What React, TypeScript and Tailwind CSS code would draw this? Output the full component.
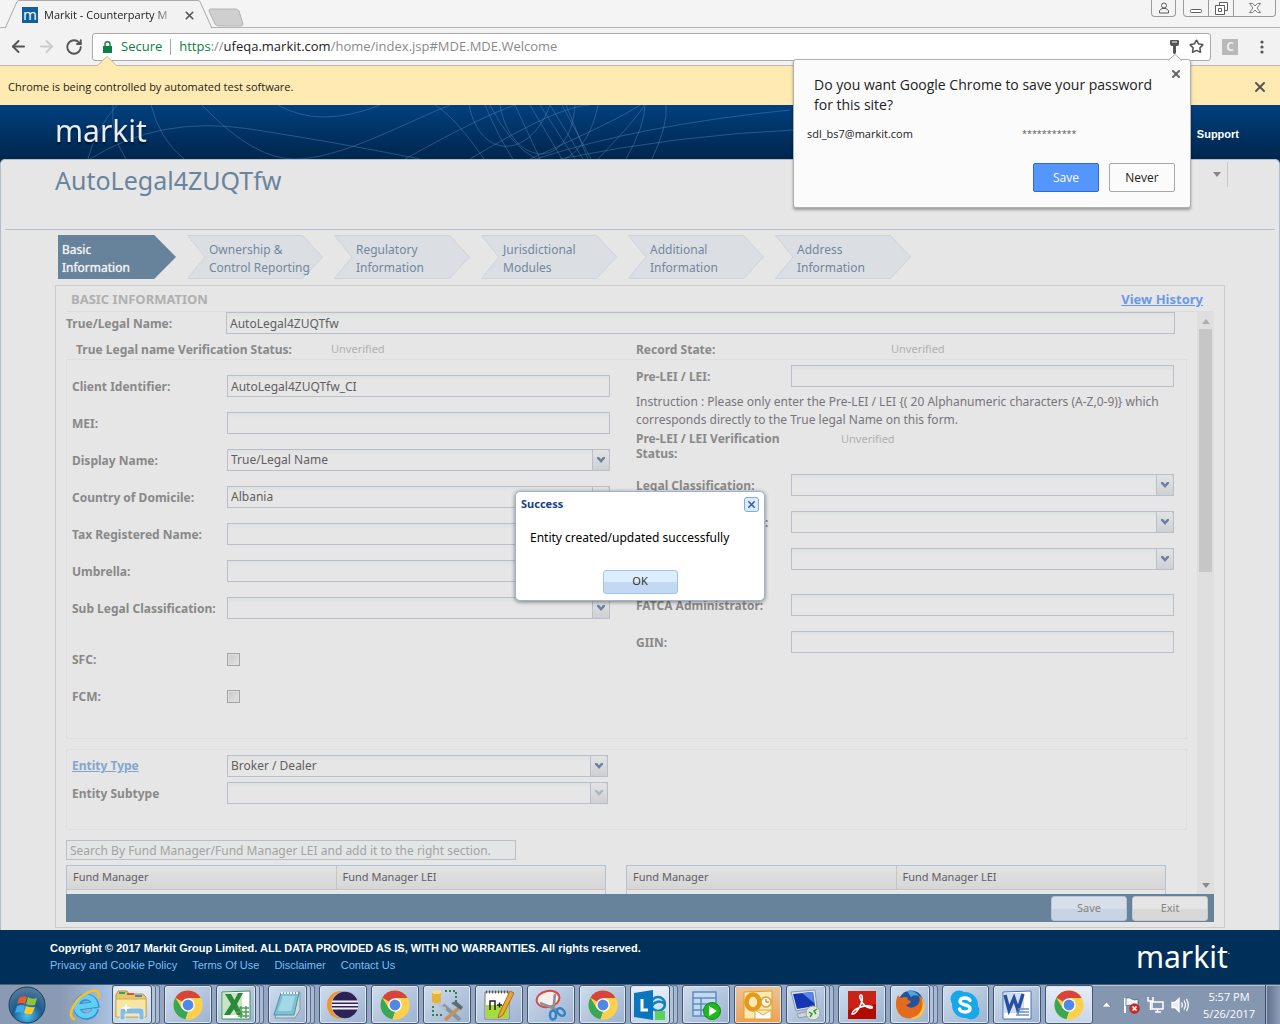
import React from "react";
import { ArrowLeft, ArrowRight, RotateCw, Star, X } from "lucide-react";

const label = "font-bold text-[12px] leading-[15px] text-[#898989]";
const field =
  "h-[22px] w-full border border-[#b9bec8] bg-linear-to-b from-[#dde1e1] via-[#e6e6e6] via-25% to-[#e6e6e6] px-[3px] text-[12px] text-[#5f5f62] outline-none rounded-none";

function Chevron({ faded = false }: { faded?: boolean }) {
  return (
    <span className="pointer-events-none absolute inset-y-0 right-0 flex w-[18px] items-center justify-center border border-[#b9bec8] rounded-tr-[3px] bg-linear-to-b from-[#e2e3e4] to-[#cfd0d1]">
      <svg width="8" height="6" viewBox="0 0 8 6" className={faded ? "opacity-40" : ""}>
        <path d="M0 0h2l2 2.200L6 0h2v1.500L4 6 0 1.500z" fill="#6d80a3" />
      </svg>
    </span>
  );
}

type RowProps = { id: string; text: string; value?: string; kind?: "text" | "select" | "check"; disabled?: boolean; className?: string };

function Row({ id, text, value = "", kind = "text", disabled, className = "" }: RowProps) {
  return (
    <div className={"flex h-[22px] items-center " + className}>
      <label htmlFor={id} className={label + " w-[155px] shrink-0 whitespace-nowrap"}>{text}</label>
      {kind === "text" && <input id={id} type="text" defaultValue={value} className={field} />}
      {kind === "select" && (
        <div className="relative min-w-0 flex-1">
          <select id={id} disabled={disabled} className={field + " appearance-none block"}>
            <option>{value}</option>
          </select>
          <Chevron faded={disabled} />
        </div>
      )}
      {kind === "check" && (
        <input id={id} type="checkbox" className="size-[13px] appearance-none border border-[#a3a3a3] bg-linear-to-br from-[#c9c9c9] to-[#e2e2e2] shadow-[inset_0_0_0_1px_#dedede]" />
      )}
    </div>
  );
}

const steps = [
  ["Basic", "Information"],
  ["Ownership &", "Control Reporting"],
  ["Regulatory", "Information"],
  ["Jurisdictional", "Modules"],
  ["Additional", "Information"],
  ["Address", "Information"],
];

function FundTable({ name }: { name: string }) {
  return (
    <table aria-label={name} className="h-[29px] w-[540px] table-fixed border-collapse border border-b-0 border-[#b2c1d6] text-left text-[11px] text-[#5f5f62]">
      <thead>
        <tr className="h-[24px] bg-linear-to-b from-[#e3e3e3] to-[#d5d5d5]">
          <th className="border-r border-b border-[#c6c6c8] px-[6px] font-normal">Fund Manager</th>
          <th className="border-b border-[#c6c6c8] px-[6px] font-normal">Fund Manager LEI</th>
        </tr>
      </thead>
      <tbody><tr><td colSpan={2} /></tr></tbody>
    </table>
  );
}

function ChromeIcon() {
  return (
    <svg width="30" height="30" viewBox="0 0 30 30">
      <circle cx="15" cy="15" r="14.5" fill="#fdd14b" />
      <path d="M15 15 2.4 7.8A14.5 14.5 0 0 1 27.6 8H15z" fill="#d8443a" />
      <path d="M2.4 7.8 8.9 18.6 15 21.5l-2.6 7.8A14.5 14.5 0 0 1 2.4 7.8z" fill="#3aa757" />
      <path d="M27.6 8H15l6.1 10.5-6.3 11A14.5 14.5 0 0 0 27.6 8z" fill="#fdd14b" />
      <circle cx="15" cy="15" r="6.8" fill="#fff" />
      <circle cx="15" cy="15" r="5.4" fill="#4e88e8" />
    </svg>
  );
}
function IEIcon() {
  return (
    <svg width="32" height="32" viewBox="0 0 32 32">
      <g transform="rotate(-8 16 16)">
        <path d="M26 21A9.500 9.500 0 1 1 26.500 17H9" fill="none" stroke="#2a8fd6" strokeWidth="7" />
        <path d="M25.500 21A9.500 9.500 0 1 1 26.200 17H9" fill="none" stroke="#62cdf7" strokeWidth="5" />
      </g>
      <path d="M6 30.500C-4 28 6 9 20 3c7-3 11.500-1.500 9 6" fill="none" stroke="#f3c02e" strokeWidth="2.600" />
    </svg>
  );
}
function FolderIcon() {
  return (
    <svg width="33" height="32" viewBox="0 0 33 32">
      <path d="M1 6 3 2h9l2 3h14l3 3v20H1z" fill="#e8c76a" stroke="#b99742" />
      <path d="M4 3h6v2H4z" fill="#37a35a" /><path d="M12 4h7v2h-7z" fill="#d55236" /><path d="M20 6h7v2h-7z" fill="#4289cf" />
      <path d="M1 10h30v18H1z" fill="#f8e6a0" stroke="#cdae5c" />
      <path d="M5 31v-9q0-3 3-3h17q4 0 4 3v9h-5v-6H10v6z" fill="#86bce2" stroke="#d9effc" />
      <path d="m11 14 1 4 4 1-4 1-1 4-1-4-4-1 4-1z" fill="#fff" />
    </svg>
  );
}
function ExcelIcon() {
  return (
    <svg width="30" height="30" viewBox="0 0 30 30">
      <path d="M1 2 29 1v28H1z" fill="#fff" stroke="#3c9550" />
      <path d="M2 3h19v22H2z" fill="#c9e4c5" />
      <path d="M4 4h6l3.500 6L17 3h5l-6 11 6 11h-6l-3-6-4 6H3l7-11z" fill="#2b8a3a" />
      <g stroke="#4d9e57" strokeWidth="1.500"><path d="M16 18h12M15 22h13M17 26h11" /><path d="M20 16v12M25 16v12" /></g>
    </svg>
  );
}
function NotepadIcon() {
  return (
    <svg width="32" height="30" viewBox="0 0 32 30">
      <path d="m10 4 19-2v18l-5 8H4z" fill="#cfd8dc" stroke="#8298a3" />
      <path d="M10 3h18l-5 22H3z" fill="#7fc0d4" stroke="#4d8fa6" />
      <path d="M12 6h12l-4 15H7z" fill="#a5d8e6" />
      <path d="M10 3h18" stroke="#eef3f5" strokeWidth="2" strokeDasharray="2 1" />
    </svg>
  );
}
function EclipseIcon() {
  return (
    <svg width="32" height="30" viewBox="0 0 32 30">
      <circle cx="14" cy="15" r="14" fill="#f7941e" />
      <circle cx="18" cy="15" r="14" fill="#a9bcd4" />
      <circle cx="18" cy="15" r="13.200" fill="#2c2255" />
      <path d="M5 11.500h26M4.800 15h26.400M5 18.500h26" stroke="#f1eef8" strokeWidth="1.800" />
    </svg>
  );
}
function ToolsIcon() {
  return (
    <svg width="32" height="32" viewBox="0 0 32 32">
      <path d="M1 3v10q4 3 9 0V3z" fill="#e7b23c" /><ellipse cx="5.500" cy="3" rx="4.500" ry="2" fill="#f7dc8a" />
      <path d="M14 2h11v12M2 17v9h10" fill="none" stroke="#35853e" strokeWidth="2" strokeDasharray="2 2" />
      <path d="m12 16 17 15" stroke="#88949e" strokeWidth="4" /><path d="M9 13q-1 7 6 6" fill="none" stroke="#b7c0c8" strokeWidth="3" />
      <path d="M29 18 14 31" stroke="#c69253" strokeWidth="3.500" /><path d="m20 14 10 7 2-3-7-6z" fill="#5f6b75" />
    </svg>
  );
}
function NppIcon() {
  return (
    <svg width="32" height="32" viewBox="0 0 32 32">
      <path d="M2 3h24v27H2z" fill="#fff" stroke="#777" /><path d="M3 16h22v13H3z" fill="#a4dc3a" />
      <path d="M3 3h22" stroke="#555" strokeWidth="3" strokeDasharray="1 2" />
      <path d="M7 21v-9h5v9M14 16h5M16.500 13.500v5M20 16h4M22 14v4" stroke="#222" strokeWidth="1.500" fill="none" />
      <path d="m16 25 11-23 4 2-11 22-5 3z" fill="#eda532" stroke="#a66f1f" />
    </svg>
  );
}
function SnipIcon() {
  return (
    <svg width="32" height="32" viewBox="0 0 32 32">
      <ellipse cx="13" cy="10" rx="11.500" ry="8" transform="rotate(-12 13 10)" fill="#f6eeee" stroke="#d84a45" strokeWidth="2" />
      <path d="m5 14 18 7M20 5l-2 18" stroke="#8b9298" strokeWidth="2.500" />
      <ellipse cx="18" cy="26" rx="3" ry="4.500" fill="none" stroke="#2e84c7" strokeWidth="2.500" />
      <ellipse cx="26" cy="23" rx="3" ry="4.500" transform="rotate(-45 26 23)" fill="none" stroke="#2e84c7" strokeWidth="2.500" />
    </svg>
  );
}
function LyncIcon() {
  return (
    <svg width="32" height="32" viewBox="0 0 32 32">
      <circle cx="24" cy="15" r="7" fill="none" stroke="#1180c6" strokeWidth="2.500" /><path d="M17 18q6-9 14-3" stroke="#1180c6" strokeWidth="2.500" fill="none" />
      <path d="M0 4 19 1v30L0 28z" fill="#0b75bd" /><path d="M8 10v11h6" fill="none" stroke="#fff" strokeWidth="3" />
      <path d="M21 22h10v9H21z" fill="#5bd15a" />
    </svg>
  );
}
function SqlIcon() {
  return (
    <svg width="30" height="30" viewBox="0 0 30 30">
      <path d="M2 2h23v24H2zM2 8h23M2 14h23M2 20h23M10 8v18" fill="#c4d9f0" stroke="#5f8cbf" strokeWidth="1.500" />
      <circle cx="21" cy="21" r="8.500" fill="#1cba1c" stroke="#0f8a10" /><path d="m18 16 8 5-8 5z" fill="#fff" />
    </svg>
  );
}
function OutlookIcon() {
  return (
    <svg width="30" height="30" viewBox="0 0 30 30">
      <path d="M1 2 29 1v28H1z" fill="#fbe9b0" stroke="#dda029" />
      <ellipse cx="10" cy="12" rx="6.500" ry="7.500" fill="none" stroke="#e5981b" strokeWidth="4.500" />
      <circle cx="23" cy="12" r="5" fill="#fff6df" stroke="#dda029" strokeWidth="1.500" /><path d="M23 9v3h3" fill="none" stroke="#a66b10" />
      <path d="M12 20h16v9H12zl8 5 8-5" fill="#fff" stroke="#d8a84c" />
    </svg>
  );
}
function RdpIcon() {
  return (
    <svg width="32" height="32" viewBox="0 0 32 32">
      <path d="m1 3 24-2 2 17-21 4z" fill="#dfe4ea" stroke="#8d98a5" /><path d="m3 5 20-2 2 14L7 20z" fill="#1435b4" /><path d="m12 4 11-1 1 11z" fill="#5a86e8" />
      <path d="m7 25 12-3 4 4-14 3z" fill="#cdd3da" stroke="#919aa5" />
      <circle cx="23" cy="24" r="7" fill="#dfe7dd" stroke="#9aa69a" /><path d="m19 23 3 2-2 3M27 20l-3 2 2 3" fill="none" stroke="#2f9a3a" strokeWidth="1.500" />
    </svg>
  );
}
function AdobeIcon() {
  return (
    <svg width="30" height="30" viewBox="0 0 30 30">
      <path d="M1 1h28v28H1z" fill="#b30b00" /><path d="M1 1h28v13L1 20z" fill="#c92317" />
      <path d="M5 24c4 1 12-12 10-18-1-2-3-1-2 2 2 6 7 11 12 10 2-2-6-3-11-1-4 1-9 4-9 7z" fill="none" stroke="#fff" strokeWidth="1.600" />
    </svg>
  );
}
function FirefoxIcon() {
  return (
    <svg width="30" height="30" viewBox="0 0 30 30">
      <circle cx="16" cy="13" r="12.500" fill="#23539a" /><path d="M12 1a12 12 0 0 1 12 5q-6-2-8 1z" fill="#4fa5dd" />
      <path d="M3 5q1 2 3 3 4-2 7 0-2 2 3 3-1 3-5 4 3 4 8 2c6-2 7-8 4-12 8 5 7 15 1 20-8 6-19 4-22-5C0 15 1 9 3 5z" fill="#e66a1b" />
      <path d="M25 5c6 10 1 22-10 23 12 4 20-11 10-23z" fill="#f9c83c" />
    </svg>
  );
}
function SkypeIcon() {
  return (
    <svg width="30" height="30" viewBox="0 0 30 30">
      <circle cx="9" cy="9" r="8.500" fill="#16a9e8" /><circle cx="21" cy="21" r="8.500" fill="#16a9e8" /><circle cx="15" cy="15" r="13" fill="#16a9e8" />
      <path d="M20 10.500C18 6.500 10 7.500 10 11.500S20 14 20 18.500 11 23 9.500 19" fill="none" stroke="#fff" strokeWidth="3.400" strokeLinecap="round" />
    </svg>
  );
}
function WordIcon() {
  return (
    <svg width="30" height="30" viewBox="0 0 30 30">
      <path d="M1 2 29 1v28H1z" fill="#fff" stroke="#4b72b8" /><path d="M2 3h20v20H2z" fill="#d0def3" />
      <path d="m3 5 4 15 5-12 4 12L21 4" fill="none" stroke="#264f9e" strokeWidth="3.400" />
      <path d="M16 19h11M14 22h13M14 25h13" stroke="#6f8fc8" strokeWidth="1.500" />
    </svg>
  );
}
function StartOrb() {
  return (
    <svg width="38" height="38" viewBox="0 0 38 38">
      <defs><radialGradient id="orb" cx=".5" cy=".8" r=".8"><stop offset="0" stopColor="#49c3f2" /><stop offset=".5" stopColor="#1d5c8f" /><stop offset="1" stopColor="#5b7f9c" /></radialGradient></defs>
      <circle cx="19" cy="19" r="18" fill="url(#orb)" stroke="#1b3c5a" />
      <path d="M11 12q4-3 8-1l-2 7q-4-2-8 0z" fill="#ee5b28" /><path d="M20 11q4 3 9 1l-2 7q-5 1-9-1z" fill="#8cc63e" />
      <path d="M9 20q4-2 8 0l-2 7q-4-2-8 0z" fill="#3fa9ee" /><path d="M18 20q4 2 9 1l-3 7q-4 1-8-1z" fill="#fdc926" />
    </svg>
  );
}

const taskbar: { name: string; icon: () => React.JSX.Element; stacked?: boolean; tone?: "light" | "orange" }[] = [
  { name: "Explorer", icon: FolderIcon, stacked: true, tone: "light" },
  { name: "Chrome", icon: ChromeIcon },
  { name: "Excel", icon: ExcelIcon, stacked: true },
  { name: "Notepad", icon: NotepadIcon, stacked: true },
  { name: "Eclipse", icon: EclipseIcon },
  { name: "Chrome", icon: ChromeIcon },
  { name: "Database tools", icon: ToolsIcon },
  { name: "Notepad++", icon: NppIcon },
  { name: "Snipping Tool", icon: SnipIcon },
  { name: "Chrome", icon: ChromeIcon },
  { name: "Lync", icon: LyncIcon, stacked: true, tone: "light" },
  { name: "SQL", icon: SqlIcon },
  { name: "Outlook", icon: OutlookIcon, tone: "orange" },
  { name: "Remote Desktop", icon: RdpIcon, stacked: true },
  { name: "Adobe Reader", icon: AdobeIcon },
  { name: "Firefox", icon: FirefoxIcon, stacked: true },
  { name: "Skype", icon: SkypeIcon },
  { name: "Word", icon: WordIcon },
  { name: "Chrome", icon: ChromeIcon, tone: "light" },
];

function Taskbar() {
  return (
    <nav aria-label="Taskbar" className="flex h-10 items-stretch border-t border-[#4b5d78] bg-[#8596b0] shadow-[inset_0_1px_0_#b9c7da]">
      <div className="flex w-[112px] shrink-0 items-center bg-linear-to-r from-[#8a9ab3] from-55% to-[#a9c3e3]">
        <button aria-label="Start" className="ml-2"><StartOrb /></button>
        <button aria-label="Internet Explorer" className="ml-[23px]"><IEIcon /></button>
      </div>
      <div className="flex min-w-0 flex-1 gap-1 bg-[#93a7c3]">
        {taskbar.map(({ name, icon: Icon, stacked, tone }, i) => (
          <div key={i} className="flex min-w-0 flex-1">
            <button
              aria-label={name}
              className={
                "flex min-w-0 flex-1 items-center justify-center rounded-[3px] border border-[#45566f] shadow-[inset_0_0_0_1px_#dbe6f3] " +
                (tone === "orange"
                  ? "bg-linear-to-b from-[#e9c49c] to-[#f0a04c]"
                  : tone === "light"
                    ? "bg-linear-to-b from-[#e6edf6] to-[#c6d6ea]"
                    : "bg-linear-to-br from-[#cfdcec] to-[#9db3d1]")
              }
            >
              <Icon />
            </button>
            {stacked && <><span className="w-[4px] rounded-r-[3px] border border-l-0 border-[#5c6e88] bg-[#b3c4da]" /><span className="w-[4px] rounded-r-[3px] border border-l-0 border-[#5c6e88] bg-[#a8bad3]" /></>}
          </div>
        ))}
      </div>
      <div className="flex w-[187px] shrink-0 items-center pl-[9px]">
        <svg width="9" height="5" viewBox="0 0 9 5"><path d="M0 5 4.500 0 9 5z" fill="#fff" stroke="#4b5a70" strokeWidth=".5" /></svg>
        <svg width="18" height="18" viewBox="0 0 18 18" className="ml-[12px]">
          <path d="M2 2v15" stroke="#fff" strokeWidth="2" /><path d="M3 2q4-1 6 1t6 0v8q-4 1-6-1T3 10z" fill="#f4f6f9" stroke="#55647b" strokeWidth=".8" />
          <circle cx="11.500" cy="12.500" r="4.800" fill="#d52b2b" stroke="#8d1414" strokeWidth=".6" /><path d="m9.500 10.500 4 4m0-4-4 4" stroke="#fff" strokeWidth="1.600" />
        </svg>
        <svg width="18" height="18" viewBox="0 0 18 18" className="ml-[6px]" fill="none" stroke="#fff" strokeWidth="1.500">
          <path d="M5 6h11v7H5zM8 16h6M10.500 13v3" /><path d="M1 1v4h5V1M3.500 5v9" />
        </svg>
        <svg width="18" height="18" viewBox="0 0 18 18" className="ml-[6px]" fill="none" stroke="#fff" strokeWidth="1.300">
          <path d="M1 6.500h3l4-4v13l-4-4H1z" fill="#e8edf4" /><path d="M10.500 6.500q1.500 2.500 0 5M13 4.500q3 4.500 0 9M15.500 3q3.500 6 0 12" />
        </svg>
        <div className="flex-1 pl-2 text-center font-['Open_Sans',sans-serif] text-[11px] leading-[17px] whitespace-nowrap text-white">
          <div>5:57 PM</div>
          <div>5/26/2017</div>
        </div>
        <button aria-label="Show desktop" className="ml-1 h-full w-[15px] border-l border-[#3e4c62] bg-linear-to-r from-[#5f708a] to-[#8d9db6] shadow-[inset_1px_1px_0_#a8b6ca]" />
      </div>
    </nav>
  );
}

function BrowserChrome() {
  return (
    <div className="relative font-['Open_Sans',sans-serif]">
      <div className="flex h-7 items-start justify-between bg-[#f4f4f4] shadow-[inset_0_-1px_0_#b4b4b4]">
        <div className="flex pl-[5px]">
          <svg width="14" height="29" viewBox="0 0 14 29"><path d="M0 29V28L12 1l2-.5V29z" fill="#f2f2f2" /><path d="M0 28.500 12 1.500 14 .5" fill="none" stroke="#a9a9a9" /></svg>
          <div className="flex h-[29px] w-[179px] items-center border-t border-[#a9a9a9] bg-[#f2f2f2] pl-[3px]">
            <span className="flex size-4 items-center justify-center bg-[#11609b] text-[15px] leading-none text-white"><span className="pb-[2px]">m</span></span>
            <span className="ml-[6px] w-[135px] text-[11px] whitespace-nowrap text-[#222] mask-r-from-80%">Markit - Counterparty M</span>
            <button aria-label="Close tab" className="ml-[4px]"><X size={13} color="#555" strokeWidth={3} /></button>
          </div>
          <svg width="14" height="29" viewBox="0 0 14 29"><path d="M0 .5 2 1.500 14 28.500V29H0z" fill="#f2f2f2" /><path d="M0 .5 2 1.500 14 28.500" fill="none" stroke="#a9a9a9" /></svg>
          <button aria-label="New tab" className="-ml-[4px] mt-[6px]">
            <svg width="36" height="19" viewBox="0 0 36 19"><path d="M2 1h25q3 0 4 2l4 13q0 2-2 2H10q-2 0-3-2L1 3q0-2 1-2z" fill="#cfcfcf" stroke="#b3b3b3" /></svg>
          </button>
        </div>
        <div className="flex pr-[4px]">
          <button aria-label="Profile" className="mr-[7px] flex h-[17px] w-[25px] items-center justify-center rounded-b border border-t-0 border-[#9b9b9b]">
            <svg width="10" height="12" viewBox="0 0 10 12" fill="none" stroke="#5d5d5d"><circle cx="5" cy="3.500" r="2.500" /><path d="M.5 11V8.500L3 6.500h4l2.500 2V11z" /></svg>
          </button>
          <div className="flex h-[17px] divide-x divide-[#9b9b9b] rounded-b border border-t-0 border-[#9b9b9b]">
            <button aria-label="Minimize" className="flex w-[25px] items-center justify-center"><svg width="12" height="12" viewBox="0 0 12 12"><rect x=".5" y="7.500" width="11" height="3" rx="1" fill="#fff" stroke="#5d5d5d" /></svg></button>
            <button aria-label="Restore" className="flex w-[25px] items-center justify-center"><svg width="13" height="13" viewBox="0 0 13 13" fill="#fff" stroke="#5d5d5d"><path d="M4.500.5h8v8h-8z" /><path d="M.5 3.500h9v9h-9z" /><path d="M3.500 6.500h3v3h-3z" /></svg></button>
            <button aria-label="Close window" className="flex w-[41px] items-center justify-center"><svg width="12" height="10" viewBox="0 0 12 10"><path d="M.5.5h3L6 3 8.500.5h3L8 5l3.500 4.500h-3L6 7 3.500 9.500h-3L4 5z" fill="#fff" stroke="#777" /></svg></button>
          </div>
        </div>
      </div>
      <div className="flex h-[38px] items-center border-b border-[#b9b9b9] bg-[#f2f2f2] pl-[9px] pr-4">
        <button aria-label="Back"><ArrowLeft size={19} color="#555" strokeWidth={2.500} /></button>
        <button aria-label="Forward" className="ml-[9px]"><ArrowRight size={19} color="#ccc" strokeWidth={2.500} /></button>
        <button aria-label="Reload" className="ml-[9px]"><RotateCw size={18} color="#555" strokeWidth={2.500} /></button>
        <div className="ml-[9px] flex h-[28px] min-w-0 flex-1 items-center rounded-[3px] border border-[#a9a9a9] bg-white pl-[10px] pr-[6px] text-[13px]">
          <svg width="9" height="12" viewBox="0 0 9 12"><path d="M0 5h9v7H0z" fill="#0b8043" /><path d="M2 5V3q0-2.300 2.500-2.300T7 3v2" fill="none" stroke="#0b8043" strokeWidth="1.400" /></svg>
          <span className="ml-[9px] text-[#0b8043]">Secure</span>
          <span className="mx-[8px] h-4 w-px bg-[#aaa]" />
          <div className="min-w-0 flex-1 truncate text-[#8a8a8a]"><span className="text-[#0b8043]">https</span>://<span className="text-[#222]">ufeqa.markit.com</span>/home/index.jsp#MDE.MDE.Welcome</div>
          <svg width="9" height="14" viewBox="0 0 9 14" className="mr-[10px]"><path d="M0 1q0-1 1-1h7q1 0 1 1v3q0 2-2 2H6v7q-1.500 2-3 0V6H2Q0 6 0 4z" fill="#555" /><path d="M2 2h5" stroke="#fff" /></svg>
          <button aria-label="Bookmark"><Star size={15} color="#555" strokeWidth={2.500} /></button>
        </div>
        <span className="ml-[11px] flex size-4 items-center justify-center bg-[#b9b9b9] text-[12px] font-bold leading-none text-[#eee]">C</span>
        <button aria-label="Menu" className="ml-[22px]"><svg width="4" height="14" viewBox="0 0 4 14" fill="#555"><circle cx="2" cy="2" r="1.600" /><circle cx="2" cy="7" r="1.600" /><circle cx="2" cy="12" r="1.600" /></svg></button>
      </div>
      <div className="relative flex h-[39px] items-center justify-between bg-[#ffeab2] pt-[3px] pl-2 pr-[12px] text-[11px] text-[#222]">
        <svg width="22" height="11" viewBox="0 0 22 11" className="absolute -top-[10px] left-[96px]"><path d="M0 11 11 .5 22 11z" fill="#ffeab2" /><path d="M0 9.500h1.500L11 .5l9.500 9H22" fill="none" stroke="#c9bb97" /></svg>
        <span>Chrome is being controlled by automated test software.</span>
        <button aria-label="Dismiss"><X size={16} color="#555" strokeWidth={3} /></button>
      </div>

      <section aria-label="Save password" className="absolute top-[59px] right-[89px] z-20 w-[398px] rounded-[3px] border border-[#b0b0b0] bg-[#fbfbfb] pb-[15px] text-[#222] shadow-[0_2px_3px_#0005]">
        <svg width="14" height="7" viewBox="0 0 14 7" className="absolute -top-[6px] right-[8px]"><path d="M0 7 7 .5 14 7z" fill="#fbfbfb" /><path d="M0 6.500 7 .5l7 6" fill="none" stroke="#b0b0b0" /></svg>
        <button aria-label="Close" className="absolute top-[8px] right-[8px]"><X size={12} color="#666" strokeWidth={4} /></button>
        <p className="pt-[15px] pl-[20px] text-[14px] leading-[20px]">Do you want Google Chrome to save your password<br />for this site?</p>
        <div className="mt-[10px] flex pl-[13px] text-[11px] leading-[18px]">
          <span className="w-[215px]">sdl_bs7@markit.com</span>
          <span className="text-[9px] text-[#555]">***********</span>
        </div>
        <div className="mt-[20px] flex justify-end gap-[10px] pr-[15px] text-[12px]">
          <button className="h-[29px] w-[66px] rounded-[2px] border border-[#2f6bcb] bg-[#5596fc] text-white">Save</button>
          <button className="h-[29px] w-[66px] rounded-[2px] border border-[#a8a8a8] bg-[#fbfbfb]">Never</button>
        </div>
      </section>
    </div>
  );
}

function SiteHeader() {
  return (
    <header className="relative flex h-[54px] items-center justify-between overflow-hidden bg-linear-to-b from-[#00407f] to-[#00264d] pl-[55px] pr-[41px]">
      <svg width="1280" height="54" viewBox="0 0 1280 54" className="absolute top-0 left-0" fill="none" stroke="#5c86b5" strokeOpacity=".45">
        <path d="M117 0Q95 25 88 54M113 0Q110 30 126 54M90 54Q160 10 250 24T420 54M151 0Q160 35 184 54M202 0C240 40 270 54 295 54C340 54 400 20 450 0M278 0Q320 24 380 0" />
        <path d="M405 54Q480 12 515 0M435 0Q455 12 484 54M470 54Q560 0 590 0M469 0C480 55 530 55 550 0M485 0Q500 35 513 54M490 0Q510 40 536 54M500 0C510 60 570 70 575 0M515 0 540 54M530 0 562 54M540 0 575 54M550 0 583 54M562 0 591 54M566 0 588 54M536 54Q640 20 790 5M560 54Q680 30 793 25M598 0Q590 40 565 54M598 54Q640 10 644 0M626 54Q645 20 645 0M652 54Q668 20 666 0M530 54Q620 14 640 0" />
      </svg>
      <span className="relative pb-[2px] font-['Noto_Sans',sans-serif] text-[30px] leading-none text-[#e9edf3] drop-shadow-[0_2px_1px_#0008]">markit</span>
      <a href="#support" className="relative pt-1 font-['Liberation_Sans',Arial,sans-serif] text-[11px] font-bold text-white">Support</a>
    </header>
  );
}

function StepBar() {
  return (
    <ol className="mt-[5px] flex gap-[11px] pl-[57px] text-[12px] leading-[18px]">
      {steps.map(([a, b], i) => (
        <li key={a} className={"relative h-[44px] " + (i === 0 ? "w-[118px]" : "w-[136px]")}>
          <svg className="absolute inset-0 size-full" viewBox={i === 0 ? "0 0 119 44" : "0 0 136 44"} preserveAspectRatio="none">
            {i === 0 ? <path d="M0 0h97l22 22-22 22H0z" fill="#67829b" /> : <path d="M.5.500h115l20 21.500-20 21.500H.5L18 22z" fill="#dbdfe4" stroke="#cdd3da" />}
          </svg>
          <button className={"relative block pt-[6px] text-left whitespace-nowrap " + (i === 0 ? "pl-[4px] text-[#eef1f3] [text-shadow:0_0_1px_#eef1f3]" : "pl-[22px] text-[#73879c]")}>{a}<br />{b}</button>
        </li>
      ))}
    </ol>
  );
}

export default function App() {
  return (
    <div className="flex min-h-screen flex-col bg-[#003059] font-['Noto_Sans',Tahoma,sans-serif]">
      <BrowserChrome />
      <SiteHeader />
      <main className="relative flex-1 rounded-t-[5px] border border-b-0 border-[#b3bccb] bg-[#e6e6e6]">
        <div className="mx-1 flex h-[70px] items-start justify-between border-b border-[#b6c0d2] pl-[50px] pr-[47px]">
          <h1 className="text-[25px] leading-[40px] text-[#69859e]">AutoLegal4ZUQTfw</h1>
          <button aria-label="Account menu" className="mt-[2px] flex h-[25px] items-center border-r border-[#c5c9cf] pr-[6px]"><svg width="8" height="5" viewBox="0 0 8 5"><path d="M0 0h8L4 5z" fill="#868686" /></svg></button>
        </div>
        <StepBar />

        <section className="mx-[54px] mt-[6px] mb-[2px] border border-[#cbcbcd] px-[10px] pb-[5px]">
          <div className="flex h-[25px] items-center justify-between pr-[11px] pl-[5px] pt-[2px]">
            <h2 className="text-[13px] font-bold text-[#b0b0b0]">BASIC INFORMATION</h2>
            <a href="#history" className="text-[13px] font-bold text-[#6a9ae6] underline">View History</a>
          </div>

          <div className="flex border-t border-[#dcdcde]">
            <div className="min-w-0 flex-1">
              <div className="flex items-center pr-[22px]">
                <label htmlFor="legal" className={label + " w-[160px] shrink-0"}>True/Legal Name:</label>
                <input id="legal" type="text" defaultValue="AutoLegal4ZUQTfw" className={field} />
              </div>
              <div className="grid h-[25px] grid-cols-2 gap-x-[26px] pt-[5px] pr-[23px] pl-[6px]">
                <div className="flex items-center pl-1"><span className={label + " w-[255px]"}>True Legal name Verification Status:</span><span className="text-[11px] text-[#b0b0b0]">Unverified</span></div>
                <div className="flex items-center"><span className={label + " w-[255px]"}>Record State:</span><span className="text-[11px] text-[#b0b0b0]">Unverified</span></div>
              </div>

              <div className="mr-[10px] grid grid-cols-2 gap-x-[26px] border border-[#dedee2] pr-[12px] pb-[31px] pl-[5px]">
                <div className="flex flex-col gap-[15px] pt-[15px]">
                  <Row id="client" text="Client Identifier:" value="AutoLegal4ZUQTfw_CI" />
                  <Row id="mei" text="MEI:" />
                  <Row id="display" text="Display Name:" value="True/Legal Name" kind="select" />
                  <Row id="country" text="Country of Domicile:" value="Albania" kind="select" />
                  <Row id="tax" text="Tax Registered Name:" />
                  <Row id="umbrella" text="Umbrella:" />
                  <Row id="sublegal" text="Sub Legal Classification:" kind="select" />
                  <Row id="sfc" text="SFC:" kind="check" className="mt-[14px]" />
                  <Row id="fcm" text="FCM:" kind="check" />
                </div>
                <div className="pt-[5px]">
                  <Row id="lei" text="Pre-LEI / LEI:" />
                  <p className="mt-[6px] text-[12px] leading-[18px] whitespace-nowrap text-[#77757c]">Instruction : Please only enter the Pre-LEI / LEI {"{( 20 Alphanumeric characters (A-Z,0-9)}"} which<br />corresponds directly to the True legal Name on this form.</p>
                  <div className="mt-[2px] flex items-start">
                    <span className={label + " w-[205px]"}>Pre-LEI / LEI Verification<br />Status:</span>
                    <span className="text-[11px] leading-[15px] text-[#b0b0b0]">Unverified</span>
                  </div>
                  <div className="mt-[13px] flex flex-col gap-[15px]">
                    <Row id="class" text="Legal Classification:" kind="select" />
                    <Row id="formation" text="Country of Formation:" kind="select" />
                    <Row id="taxstatus" text="Tax Status:" kind="select" />
                    <Row id="fatca" text="FATCA Administrator:" className="mt-[9px]" />
                    <Row id="giin" text="GIIN:" />
                  </div>
                </div>
              </div>

              <div className="mt-[10px] mr-[10px] border border-[#dedee2] pt-[5px] pb-[25px] pl-[5px]">
                <div className="flex w-[536px] flex-col gap-[5px]">
                  <div className="flex h-[22px] items-center">
                    <a href="#entity-type" id="etype" className="w-[155px] shrink-0 text-[12px] font-bold text-[#82a5d0] underline">Entity Type</a>
                    <div className="relative flex-1">
                      <select aria-labelledby="etype" className={field + " block appearance-none"}><option>Broker / Dealer</option></select>
                      <Chevron />
                    </div>
                  </div>
                  <Row id="esub" text="Entity Subtype" kind="select" disabled />
                </div>
              </div>

              <input type="search" aria-label="Search fund managers" placeholder="Search By Fund Manager/Fund Manager LEI and add it to the right section." className="mt-[10px] block h-[20px] w-[450px] border border-[#b9bec8] bg-[#e4e5e5] px-[3px] text-[12px] outline-none placeholder:text-[#a3a3a3]" />
              <div className="mt-[5px] flex gap-5">
                <FundTable name="Available fund managers" />
                <FundTable name="Selected fund managers" />
              </div>
            </div>
            <div aria-hidden="true" className="flex w-[17px] shrink-0 flex-col items-center bg-[#dfdfdf] pt-[7px] pb-[6px]">
              <svg width="8" height="5" viewBox="0 0 8 5"><path d="M0 5h8L4 0z" fill="#adadad" /></svg>
              <div className="mt-[5px] h-[243px] w-[13px] bg-[#c6c6c6]" />
              <svg width="8" height="5" viewBox="0 0 8 5" className="mt-auto"><path d="M0 0h8L4 5z" fill="#8a8a8a" /></svg>
            </div>
          </div>

          <div className="flex h-[28px] items-center justify-end gap-[5px] bg-[#67829b] pr-[6px] text-[11px] text-[#858585]">
            <button className="h-[25px] w-[76px] rounded-[3px] border border-[#b4c6de] bg-linear-to-b from-[#d8dfe8] from-50% to-[#c9d4e2] to-50%">Save</button>
            <button className="h-[25px] w-[76px] rounded-[3px] border border-[#c9c9c9] bg-linear-to-b from-[#e5e5e5] from-50% to-[#d8d8d8] to-50%">Exit</button>
          </div>
        </section>

        <div className="absolute inset-0 flex items-center justify-center pt-px">
          <div role="dialog" aria-labelledby="dlg" className="w-[250px] rounded-[5px] border border-[#9fb3d1] bg-white pb-[6px] shadow-[0_1px_4px_#0007]">
            <div className="flex h-[26px] items-center justify-between pl-[5px] pr-[5px]">
              <h2 id="dlg" className="text-[11px] font-bold text-[#15428b]">Success</h2>
              <button aria-label="Close" className="flex size-[15px] items-center justify-center rounded-[3px] border border-[#7fabde] bg-[#dcebfb]"><X size={11} color="#2b4f9a" strokeWidth={3} /></button>
            </div>
            <p className="mt-[11px] pl-[14px] text-[12px] leading-[18px] text-black">Entity created/updated successfully</p>
            <button className="mx-auto mt-[23px] block h-[24px] w-[75px] rounded-[3px] border border-[#9fc3ec] bg-linear-to-b from-[#dceefe] from-50% to-[#c2d8f3] to-50% text-[11px] text-[#333]">OK</button>
          </div>
        </div>
      </main>
      <footer className="flex h-[54px] items-center justify-between bg-[#003059] pr-[50px] pl-[50px] font-['Liberation_Sans',Arial,sans-serif] text-[11px] leading-[17px]">
        <div>
          <p className="font-bold text-white">Copyright © 2017 Markit Group Limited. ALL DATA PROVIDED AS IS, WITH NO WARRANTIES. All rights reserved.</p>
          <div className="flex gap-[15px] text-[#7fbcf5]">
            <a href="#privacy">Privacy and Cookie Policy</a>
            <a href="#terms">Terms Of Use</a>
            <a href="#disclaimer">Disclaimer</a>
            <a href="#contact">Contact Us</a>
          </div>
        </div>
        <span className="font-['Noto_Sans',sans-serif] text-[30px] leading-none text-white">markit<span className="align-super text-[8px]">·</span></span>
      </footer>
      <Taskbar />
    </div>
  );
}
